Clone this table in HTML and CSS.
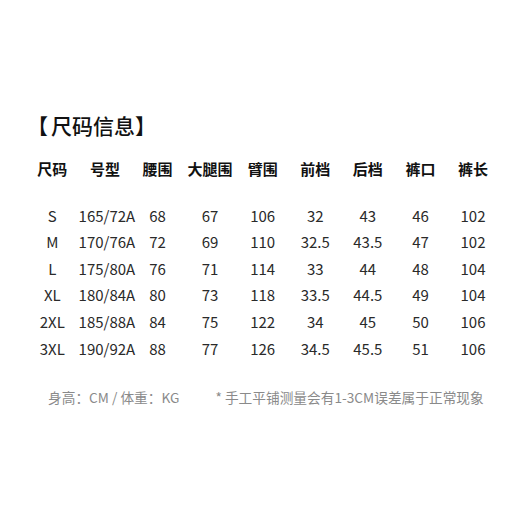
FILE: index.html
```html
<!DOCTYPE html>
<html lang="zh-CN">
<head>
<meta charset="utf-8">
<link rel="stylesheet" href="styles.css">
</head>
<body>
<div class="page">
  <h1 class="title"><span class="bracket">【</span>尺码信息】</h1>
  <div class="table">
    <div class="row head">
      <span>尺码</span><span>号型</span><span>腰围</span><span>大腿围</span><span>臂围</span><span>前档</span><span>后档</span><span>裤口</span><span>裤长</span>
    </div>
    <div class="body">
      <div class="row"><span>S</span><span>165/72A</span><span>68</span><span>67</span><span>106</span><span>32</span><span>43</span><span>46</span><span>102</span></div>
      <div class="row"><span>M</span><span>170/76A</span><span>72</span><span>69</span><span>110</span><span>32.5</span><span>43.5</span><span>47</span><span>102</span></div>
      <div class="row"><span>L</span><span>175/80A</span><span>76</span><span>71</span><span>114</span><span>33</span><span>44</span><span>48</span><span>104</span></div>
      <div class="row"><span>XL</span><span>180/84A</span><span>80</span><span>73</span><span>118</span><span>33.5</span><span>44.5</span><span>49</span><span>104</span></div>
      <div class="row"><span>2XL</span><span>185/88A</span><span>84</span><span>75</span><span>122</span><span>34</span><span>45</span><span>50</span><span>106</span></div>
      <div class="row"><span>3XL</span><span>190/92A</span><span>88</span><span>77</span><span>126</span><span>34.5</span><span>45.5</span><span>51</span><span>106</span></div>
    </div>
  </div>
  <div class="note">
    <span class="unit">身高：CM / 体重：KG</span>
    <span class="tip">* 手工平铺测量会有1-3CM误差属于正常现象</span>
  </div>
</div>
</body>
</html>
```
FILE: styles.css
```css
html, body {
  margin: 0;
  padding: 0;
  background: #ffffff;
}
body {
  font-family: "Noto Sans CJK SC", "Noto Sans", sans-serif;
  color: #222222;
}
.page {
  width: 520px;
  height: 520px;
  box-sizing: border-box;
  padding-top: 113px;
}
.title {
  margin: 0 0 0 27px;
  font-size: 21px;
  line-height: 25px;
  font-weight: 500;
  color: #111111;
}
.bracket {
  margin-right: 3px;
}
.table {
  margin-left: 26px;
  margin-top: 19px;
}
.row {
  display: grid;
  grid-template-columns: repeat(9, 52.6px);
  text-align: center;
  height: 26.6px;
  line-height: 26.6px;
  font-size: 15px;
  color: #2a2a2a;
}
.row span {
  white-space: nowrap;
}
.head {
  height: 24px;
  line-height: 24px;
  font-size: 15px;
  font-weight: 700;
  color: #111111;
}
.body {
  margin-top: 21.7px;
}
.note {
  margin-top: 24.3px;
  padding-left: 48px;
  display: flex;
  gap: 36px;
  font-size: 13.7px;
  line-height: 20px;
  color: #8a8a8a;
}
```
